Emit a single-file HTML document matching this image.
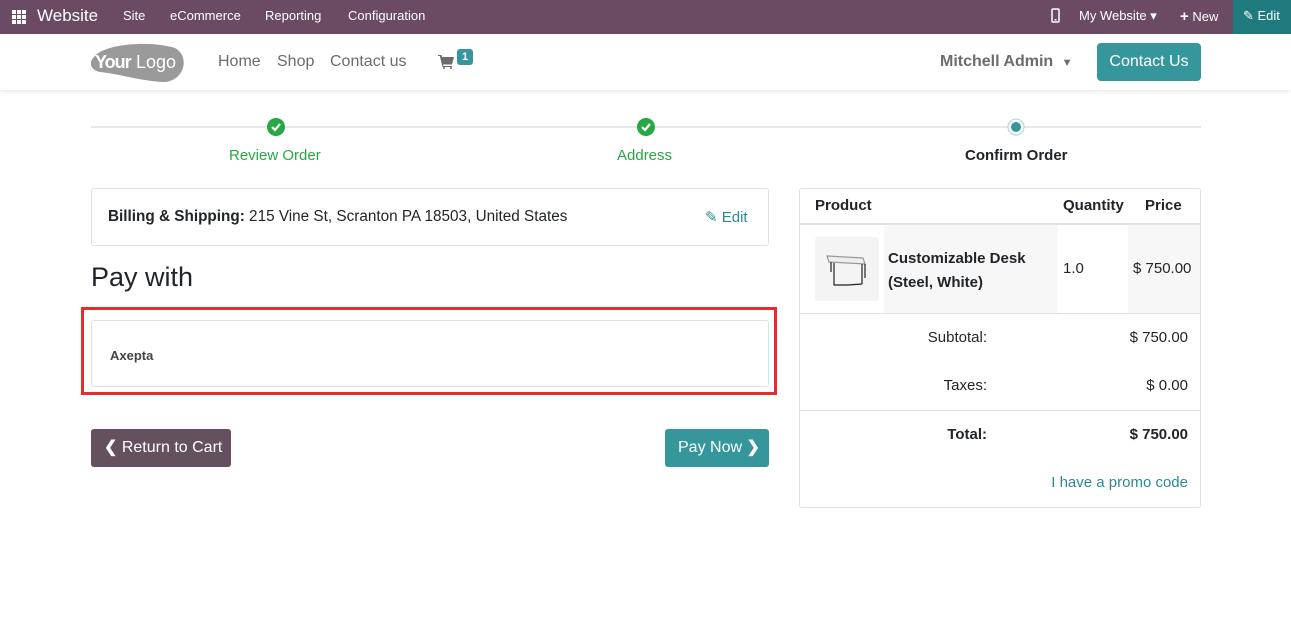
<!DOCTYPE html>
<html><head><style>
*{box-sizing:border-box;margin:0;padding:0}
body{width:1291px;height:629px;background:#fff;font-family:"Liberation Sans",sans-serif;position:relative;overflow:hidden;color:#212529}
.a{position:absolute;white-space:nowrap}
.top{left:0;top:0;width:1291px;height:34px;background:#6b4a63}
.top .a{color:#fff;font-size:13px;top:8px}
.hdr{left:0;top:34px;width:1291px;height:56px;background:#fff;box-shadow:0 2px 4px rgba(0,0,0,.08)}
.nav{color:#6c6c6c;font-size:16px;top:53px}
.grn{color:#28a745;font-size:15px}
.r{text-align:right}
</style></head><body>
<div class="a top">
 <svg class="a" style="left:12px;top:10px" width="14" height="14" viewBox="0 0 14 14" fill="#fff"><rect x="0" y="0" width="4" height="4"/><rect x="5" y="0" width="4" height="4"/><rect x="10" y="0" width="4" height="4"/><rect x="0" y="5" width="4" height="4"/><rect x="5" y="5" width="4" height="4"/><rect x="10" y="5" width="4" height="4"/><rect x="0" y="10" width="4" height="4"/><rect x="5" y="10" width="4" height="4"/><rect x="10" y="10" width="4" height="4"/></svg>
 <div class="a" style="left:37px;top:6px;font-size:17px">Website</div>
 <div class="a" style="left:123px">Site</div>
 <div class="a" style="left:170px">eCommerce</div>
 <div class="a" style="left:265px">Reporting</div>
 <div class="a" style="left:348px">Configuration</div>
 <svg class="a" style="left:1051px;top:8px" width="9" height="15" viewBox="0 0 9 15"><rect x="1" y="1" width="7" height="13" rx="1" fill="none" stroke="#fff" stroke-width="1.5"/><rect x="3.5" y="11" width="2" height="1.5" fill="#fff"/></svg>
 <div class="a" style="left:1079px">My Website ▾</div>
 <div class="a" style="left:1180px"><b style="font-size:15px">+</b> New</div>
 <div class="a" style="left:1233px;top:0;width:58px;height:34px;background:#1f7a7e"></div>
 <div class="a" style="left:1243px">✎ Edit</div>
</div>
<div class="a hdr"></div>
<svg class="a" style="left:90px;top:42px" width="97" height="40" viewBox="0 0 97 40"><path d="M5 14 C15 2 60 -2 85 6 C100 14 95 38 75 40 C55 40 30 32 10 30 C0 28 -2 20 5 14Z" fill="#9a9a9a"/><text x="5" y="26" font-family="Liberation Sans" font-size="18" font-weight="bold" fill="#fff" letter-spacing="-1">Your</text><text x="46" y="26" font-family="Liberation Sans" font-size="18" fill="#fff">Logo</text></svg>
<div class="a nav" style="left:218px">Home</div>
<div class="a nav" style="left:277px">Shop</div>
<div class="a nav" style="left:330px">Contact us</div>
<svg class="a" style="left:438px;top:55px" width="16" height="14" viewBox="0 0 16 14" fill="#6c6c6c"><path d="M0 0h3.5l.5 2h12l-2 7.5H5l.4 1.5H14v1H4.5L1.8 1H0z"/><circle cx="6" cy="13" r="1"/><circle cx="13" cy="13" r="1"/></svg>
<div class="a" style="left:457px;top:49px;width:16px;height:16px;background:#35979c;border-radius:3px;color:#fff;font-size:11px;font-weight:bold;text-align:center;line-height:16px">1</div>
<div class="a nav" style="left:940px;font-weight:bold">Mitchell Admin <span style="font-size:11px;margin-left:4px">▼</span></div>
<div class="a" style="left:1097px;top:43px;width:104px;height:38px;background:#35979c;border-radius:4px;color:#fff;font-size:16px;text-align:center;line-height:38px">Contact Us</div>

<div class="a" style="left:91px;top:126px;width:1110px;height:2px;background:#e6e8ea"></div>
<svg class="a" style="left:267px;top:118px" width="18" height="18" viewBox="0 0 18 18"><circle cx="9" cy="9" r="9" fill="#28a745"/><path d="M5 9l3 3 5-6" stroke="#fff" stroke-width="2.2" fill="none"/></svg>
<svg class="a" style="left:637px;top:118px" width="18" height="18" viewBox="0 0 18 18"><circle cx="9" cy="9" r="9" fill="#28a745"/><path d="M5 9l3 3 5-6" stroke="#fff" stroke-width="2.2" fill="none"/></svg>
<svg class="a" style="left:1007px;top:118px" width="18" height="18" viewBox="0 0 18 18"><circle cx="9" cy="9" r="8" fill="#fff" stroke="#a6d4d6"/><circle cx="9" cy="9" r="5" fill="#35979c"/></svg>
<div class="a grn" style="left:229px;top:147px">Review Order</div>
<div class="a grn" style="left:617px;top:147px">Address</div>
<div class="a" style="left:965px;top:147px;font-size:15px;font-weight:bold">Confirm Order</div>

<div class="a" style="left:91px;top:188px;width:678px;height:58px;border:1px solid #dee2e6;border-radius:3px"></div>
<div class="a" style="left:108px;top:208px;font-size:15.3px"><b>Billing &amp; Shipping:</b> 215 Vine St, Scranton PA 18503, United States</div>
<div class="a" style="left:705px;top:208px;font-size:15px;color:#2c8a8e">✎ Edit</div>
<div class="a" style="left:91px;top:262px;font-size:27px">Pay with</div>
<div class="a" style="left:81px;top:307px;width:696px;height:88px;border:3px solid #ea2a2e"></div>
<div class="a" style="left:91px;top:320px;width:678px;height:67px;border:1px solid #dee2e6;border-radius:3px"></div>
<div class="a" style="left:110px;top:348px;font-size:13px;font-weight:bold;color:#444">Axepta</div>
<div class="a" style="left:91px;top:429px;width:140px;height:38px;background:#655060;border-radius:3px;color:#fff;font-size:16px;line-height:38px;padding-left:13px"><b>❮</b> Return to Cart</div>
<div class="a" style="left:665px;top:429px;width:104px;height:38px;background:#35979c;border-radius:3px;color:#fff;font-size:16px;line-height:38px;padding-left:13px">Pay Now <b>❯</b></div>

<div class="a" style="left:799px;top:188px;width:402px;height:320px;border:1px solid #dee2e6;border-radius:3px"></div>
<div class="a" style="left:815px;top:197px;font-size:15px;font-weight:bold">Product</div>
<div class="a" style="left:1063px;top:197px;font-size:15px;font-weight:bold">Quantity</div>
<div class="a" style="left:1145px;top:197px;font-size:15px;font-weight:bold">Price</div>
<div class="a" style="left:800px;top:223px;width:400px;height:2px;background:#dee2e6"></div>
<div class="a" style="left:884px;top:225px;width:174px;height:88px;background:#f7f7f7"></div>
<div class="a" style="left:1128px;top:225px;width:72px;height:88px;background:#f7f7f7"></div>
<div class="a" style="left:815px;top:237px;width:64px;height:64px;background:#f4f4f4;border-radius:3px"></div>
<svg class="a" style="left:825px;top:252px" width="44" height="34" viewBox="0 0 44 34" fill="none" stroke="#222" stroke-width="1.2"><path d="M2 4l36 2 2 6-36-2z" fill="#eee" stroke="#999"/><path d="M6 10v10M9 11v22h14M37 12v20M40 12v14M23 33l14-1"/></svg>
<div class="a" style="left:888px;top:247px;font-size:15px;font-weight:bold;line-height:24px">Customizable Desk<br>(Steel, White)</div>
<div class="a" style="left:1063px;top:260px;font-size:15px">1.0</div>
<div class="a" style="left:1133px;top:260px;font-size:15px">$ 750.00</div>
<div class="a" style="left:800px;top:313px;width:400px;height:1px;background:#dee2e6"></div>
<div class="a r" style="left:887px;width:100px;top:329px;font-size:15px">Subtotal:</div>
<div class="a r" style="left:1088px;width:100px;top:329px;font-size:15px">$ 750.00</div>
<div class="a r" style="left:887px;width:100px;top:377px;font-size:15px">Taxes:</div>
<div class="a r" style="left:1088px;width:100px;top:377px;font-size:15px">$ 0.00</div>
<div class="a" style="left:800px;top:410px;width:400px;height:1px;background:#dee2e6"></div>
<div class="a r" style="left:887px;width:100px;top:426px;font-size:15px;font-weight:bold">Total:</div>
<div class="a r" style="left:1088px;width:100px;top:426px;font-size:15px;font-weight:bold">$ 750.00</div>
<div class="a r" style="left:988px;width:200px;top:474px;font-size:15px;color:#2c8a8e">I have a promo code</div>
</body></html>
